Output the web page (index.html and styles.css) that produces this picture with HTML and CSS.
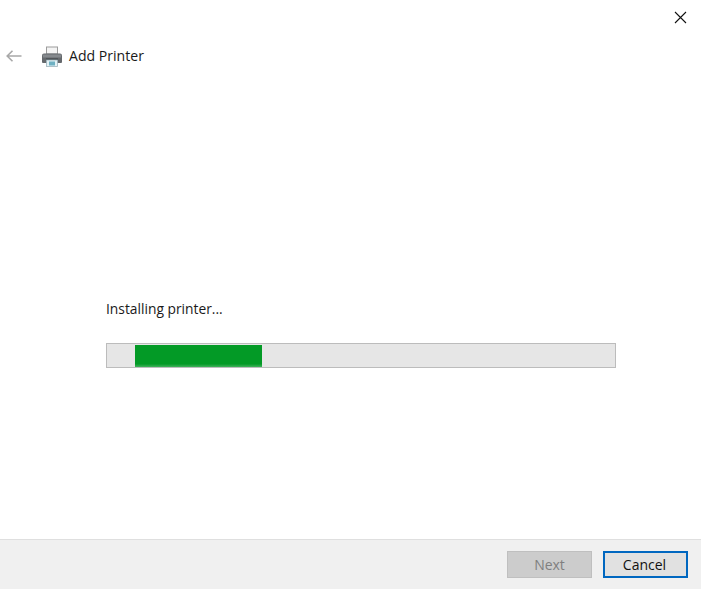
FILE: index.html
```html
<!DOCTYPE html>
<html lang="en">
<head>
<meta charset="utf-8">
<title>Add Printer</title>
<link rel="stylesheet" href="styles.css">
</head>
<body>
<div class="dialog">
  <div class="titlebar">
    <svg class="close" width="13" height="13" viewBox="0 0 13 13"><path d="M1 1 L12 12 M12 1 L1 12" stroke="#111" stroke-width="1.1" fill="none"/></svg>
  </div>
  <div class="header">
    <svg class="back" width="16" height="12" viewBox="0 0 16 12"><path d="M6.5 .7 L1.2 6 L6.5 11.3 M1.2 6 H15.5" stroke="#a8a8a8" stroke-width="1.6" fill="none"/></svg>
    <svg class="printer" width="22" height="22" viewBox="0 0 22 22">
      <rect x="5.5" y="1" width="11" height="7" fill="#f4f4f4" stroke="#9c9c9c"/>
      <path d="M3 7.5 H19 Q21 7.5 21 9.5 V16 Q21 17 20 17 H2 Q1 17 1 16 V9.5 Q1 7.5 3 7.5Z" fill="#65696d"/>
      <rect x="2" y="8.5" width="18" height="3" fill="#85898d"/>
      <rect x="5" y="12.5" width="12" height="2" fill="#3c4044"/>
      <rect x="5.5" y="14" width="11" height="6.5" fill="#e4f2f6" stroke="#9fb4bc" stroke-width=".8"/>
      <rect x="8" y="15.5" width="6" height="4" fill="#6fb1c3"/>
    </svg>
    <span class="title">Add Printer</span>
  </div>
  <main class="content">
    <p class="status">Installing printer...</p>
    <div class="track"><div class="fill"></div></div>
  </main>
  <footer class="footer">
    <button class="btn" disabled>Next</button>
    <button class="btn primary">Cancel</button>
  </footer>
</div>
</body>
</html>
```
FILE: styles.css
```css
* { box-sizing: border-box; }
html, body { margin: 0; height: 100%; }
body { background: #fff; font-family: "Open Sans", "Noto Sans", "Liberation Sans", sans-serif; color: #1a1a1a; overflow: hidden; }
.dialog { height: 100vh; display: flex; flex-direction: column; }
.titlebar { height: 44px; padding: 11px 14px 0 0; display: flex; justify-content: flex-end; align-items: flex-start; flex: none; }
.close { display: block; }
.header { height: 24px; display: flex; align-items: center; padding-left: 6px; flex: none; }
.back { flex: none; }
.printer { margin-left: 19px; margin-top: 1px; flex: none; }
.title { margin-left: 6px; font-size: 14.1px; line-height: 24px; }
.content { flex: 1; padding: 231px 85px 0 106px; }
.status { margin: 0; font-size: 13.8px; line-height: 20px; }
.track { margin-top: 24px; height: 25px; background: #e6e6e6; border: 1px solid #bcbcbc; padding: 1px 0 0 28px; }
.fill { width: 127px; height: 22px; background: linear-gradient(to bottom, #039a26 0, #039a26 86%, #3fb25a 100%); }
.footer { height: 50px; flex: none; background: #f0f0f0; border-top: 1px solid #dfdfdf; display: flex; justify-content: flex-end; gap: 11px; padding: 11px 13px 0 0; }
.btn { width: 85px; height: 27px; padding: 0 2px 0 0; font: inherit; font-size: 14px; line-height: 1; background: #e1e1e1; border: 2px solid #e1e1e1; color: #111; }
.btn:disabled { background: #ccc; border: 1px solid #bfbfbf; color: #7f7f7f; padding: 0; }
.primary { border-color: #0067c0; }
```
